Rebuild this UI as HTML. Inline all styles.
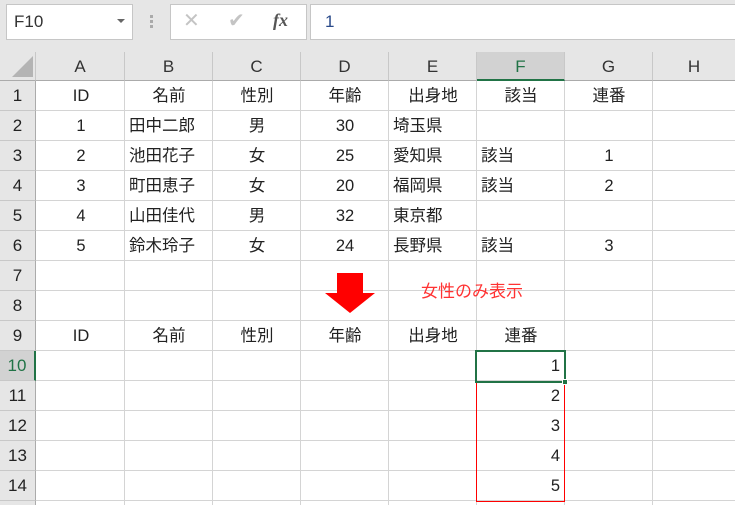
<!DOCTYPE html>
<html><head><meta charset="utf-8"><style>
html,body{margin:0;width:735px;height:505px;overflow:hidden}
body{background:#fff;font-family:"Liberation Sans","Noto Sans CJK JP",sans-serif;position:relative;color:#222}
div{position:absolute;box-sizing:border-box}
.top{left:0;top:0;width:735px;height:52px;background:#e6e6e6}
.box{background:#fff;border:1px solid #c6c6c6}
.ch{top:52px;height:29px;background:#e6e6e6;border-right:1px solid #c8c8c8;border-bottom:1px solid #ababab;text-align:center;line-height:30px;font-size:17px;color:#333}
.rh{left:0;width:36px;height:30px;background:#e6e6e6;border-right:1px solid #ababab;border-bottom:1px solid #c8c8c8;text-align:center;line-height:30px;font-size:17px;color:#222}
.v{top:81px;width:1px;height:424px;background:#d4d4d4}
.h{left:36px;width:699px;height:1px;background:#d4d4d4}
.c{height:30px;line-height:31px;font-size:16.5px;text-align:center;width:88px}
.l{text-align:left;padding-left:4px}
.r{text-align:right;padding-right:5px}
</style></head><body>
<div class="top"></div>
<div class="box" style="left:6px;top:4px;width:127px;height:36px;font-size:17px;line-height:34px;padding-left:7px;color:#333">F10</div>
<div style="left:117px;top:19px;width:0;height:0;border-left:4px solid transparent;border-right:4px solid transparent;border-top:4px solid #666"></div>
<div style="left:150px;top:15px;width:3px;height:3px;background:#aaa;box-shadow:0 5px 0 #aaa,0 10px 0 #aaa"></div>
<div class="box" style="left:170px;top:4px;width:137px;height:36px"></div>
<div style="left:183px;top:10px;font-size:20px;color:#c4c4c4;line-height:22px">✕</div>
<div style="left:228px;top:10px;font-size:20px;color:#c4c4c4;line-height:22px">✔</div>
<div style="left:273px;top:9px;font-size:18px;color:#555;font-style:italic;font-family:'Liberation Serif',serif;font-weight:bold;line-height:22px">fx</div>
<div class="box" style="left:310px;top:4px;width:430px;height:36px;font-size:17px;line-height:34px;padding-left:14px;color:#2a4a8a">1</div>
<div style="left:0;top:52px;width:36px;height:29px;background:#e6e6e6;border-right:1px solid #c8c8c8;border-bottom:1px solid #ababab"></div>
<div style="left:12px;top:56px;width:0;height:0;border-left:21px solid transparent;border-bottom:21px solid #b4b4b4"></div>
<div class="ch" style="left:36px;width:89px">A</div>
<div class="ch" style="left:125px;width:88px">B</div>
<div class="ch" style="left:213px;width:88px">C</div>
<div class="ch" style="left:301px;width:88px">D</div>
<div class="ch" style="left:389px;width:88px">E</div>
<div class="ch" style="left:477px;width:88px;background:#d2d2d2;border-bottom:2px solid #217346;color:#217346">F</div>
<div class="ch" style="left:565px;width:88px">G</div>
<div class="ch" style="left:653px;width:82px;border-right:none">H</div>
<div class="rh" style="top:81px">1</div><div class="rh" style="top:111px">2</div><div class="rh" style="top:141px">3</div><div class="rh" style="top:171px">4</div><div class="rh" style="top:201px">5</div><div class="rh" style="top:231px">6</div><div class="rh" style="top:261px">7</div><div class="rh" style="top:291px">8</div><div class="rh" style="top:321px">9</div>
<div class="rh" style="top:351px;background:#d2d2d2;border-right:2px solid #217346;color:#217346">10</div>
<div class="rh" style="top:381px">11</div><div class="rh" style="top:411px">12</div><div class="rh" style="top:441px">13</div><div class="rh" style="top:471px">14</div><div class="rh" style="top:501px;height:4px;border-bottom:none"></div>
<div class="v" style="left:124px"></div><div class="v" style="left:212px"></div><div class="v" style="left:300px"></div><div class="v" style="left:388px"></div><div class="v" style="left:476px"></div><div class="v" style="left:564px"></div><div class="v" style="left:652px"></div>
<div class="h" style="top:110px"></div><div class="h" style="top:140px"></div><div class="h" style="top:170px"></div><div class="h" style="top:200px"></div><div class="h" style="top:230px"></div><div class="h" style="top:260px"></div><div class="h" style="top:290px"></div><div class="h" style="top:320px"></div><div class="h" style="top:350px"></div><div class="h" style="top:380px"></div><div class="h" style="top:410px"></div><div class="h" style="top:440px"></div><div class="h" style="top:470px"></div><div class="h" style="top:500px"></div>

<div class="c" style="left:37px;top:81px">ID</div><div class="c" style="left:125px;top:81px">名前</div><div class="c" style="left:213px;top:81px">性別</div><div class="c" style="left:301px;top:81px">年齢</div><div class="c" style="left:389px;top:81px">出身地</div><div class="c" style="left:477px;top:81px">該当</div><div class="c" style="left:565px;top:81px">連番</div>
<div class="c" style="left:37px;top:111px">1</div><div class="c l" style="left:125px;top:111px">田中二郎</div><div class="c" style="left:213px;top:111px">男</div><div class="c" style="left:301px;top:111px">30</div><div class="c l" style="left:389px;top:111px">埼玉県</div>
<div class="c" style="left:37px;top:141px">2</div><div class="c l" style="left:125px;top:141px">池田花子</div><div class="c" style="left:213px;top:141px">女</div><div class="c" style="left:301px;top:141px">25</div><div class="c l" style="left:389px;top:141px">愛知県</div><div class="c l" style="left:477px;top:141px">該当</div><div class="c" style="left:565px;top:141px">1</div>
<div class="c" style="left:37px;top:171px">3</div><div class="c l" style="left:125px;top:171px">町田恵子</div><div class="c" style="left:213px;top:171px">女</div><div class="c" style="left:301px;top:171px">20</div><div class="c l" style="left:389px;top:171px">福岡県</div><div class="c l" style="left:477px;top:171px">該当</div><div class="c" style="left:565px;top:171px">2</div>
<div class="c" style="left:37px;top:201px">4</div><div class="c l" style="left:125px;top:201px">山田佳代</div><div class="c" style="left:213px;top:201px">男</div><div class="c" style="left:301px;top:201px">32</div><div class="c l" style="left:389px;top:201px">東京都</div>
<div class="c" style="left:37px;top:231px">5</div><div class="c l" style="left:125px;top:231px">鈴木玲子</div><div class="c" style="left:213px;top:231px">女</div><div class="c" style="left:301px;top:231px">24</div><div class="c l" style="left:389px;top:231px">長野県</div><div class="c l" style="left:477px;top:231px">該当</div><div class="c" style="left:565px;top:231px">3</div>
<div style="left:337px;top:273px;width:26px;height:21px;background:#ff0000"></div>
<div style="left:325px;top:293px;width:0;height:0;border-left:25px solid transparent;border-right:25px solid transparent;border-top:20px solid #ff0000"></div>
<div style="left:421px;top:277px;font-size:17px;color:#ff3333;line-height:30px;white-space:nowrap">女性のみ表示</div>
<div class="c" style="left:37px;top:321px">ID</div><div class="c" style="left:125px;top:321px">名前</div><div class="c" style="left:213px;top:321px">性別</div><div class="c" style="left:301px;top:321px">年齢</div><div class="c" style="left:389px;top:321px">出身地</div><div class="c" style="left:477px;top:321px">連番</div>
<div style="left:476px;top:381px;width:89px;height:121px;border:1px solid #ff0000;border-top:none"></div>
<div style="left:475px;top:350px;width:91px;height:33px;border:2px solid #217346"></div>
<div style="left:562px;top:379px;width:6px;height:6px;background:#217346;border:1px solid #fff"></div>
<div class="c r" style="left:477px;top:351px">1</div>
<div class="c r" style="left:477px;top:381px">2</div>
<div class="c r" style="left:477px;top:411px">3</div>
<div class="c r" style="left:477px;top:441px">4</div>
<div class="c r" style="left:477px;top:471px">5</div>
</body></html>
